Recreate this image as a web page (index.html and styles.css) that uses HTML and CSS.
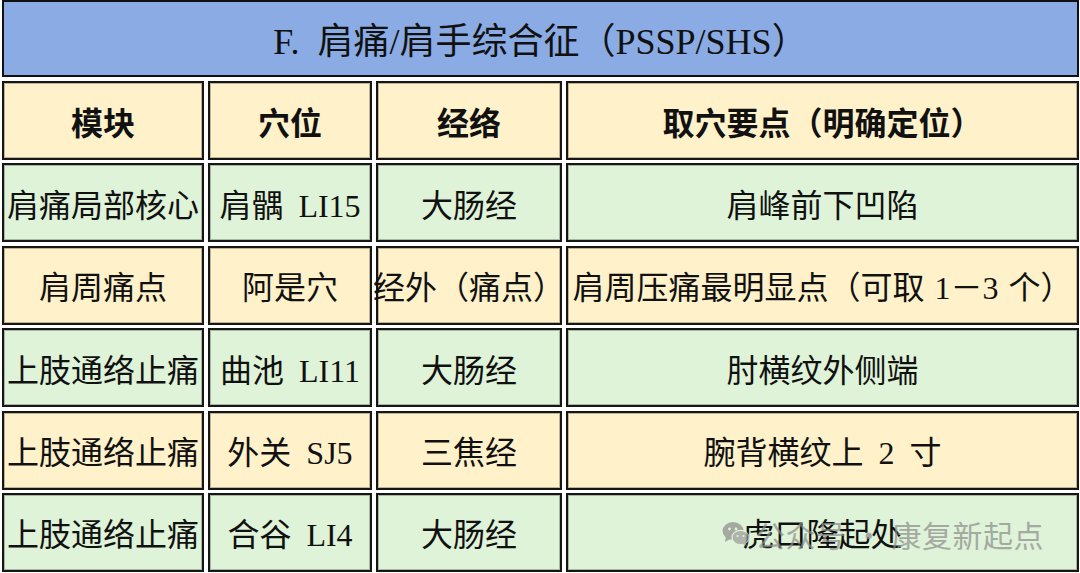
FILE: index.html
```html
<!DOCTYPE html>
<html lang="zh-CN">
<head>
<meta charset="utf-8">
<title>肩痛/肩手综合征</title>
<link rel="stylesheet" href="styles.css">
</head>
<body>
<div class="page">
  <div class="title">F. 肩痛/肩手综合征（PSSP/SHS）</div>
  <div class="grid">
    <div class="cell head">模块</div>
    <div class="cell head">穴位</div>
    <div class="cell head">经络</div>
    <div class="cell head">取穴要点（明确定位）</div>

    <div class="cell green">肩痛局部核心</div>
    <div class="cell green">肩髃 LI15</div>
    <div class="cell green">大肠经</div>
    <div class="cell green">肩峰前下凹陷</div>

    <div class="cell cream">肩周痛点</div>
    <div class="cell cream">阿是穴</div>
    <div class="cell cream">经外（痛点）</div>
    <div class="cell cream tight">肩周压痛最明显点（可取 1－3 个）</div>

    <div class="cell green">上肢通络止痛</div>
    <div class="cell green">曲池 LI11</div>
    <div class="cell green">大肠经</div>
    <div class="cell green">肘横纹外侧端</div>

    <div class="cell cream">上肢通络止痛</div>
    <div class="cell cream">外关 SJ5</div>
    <div class="cell cream">三焦经</div>
    <div class="cell cream">腕背横纹上 2 寸</div>

    <div class="cell green">上肢通络止痛</div>
    <div class="cell green">合谷 LI4</div>
    <div class="cell green">大肠经</div>
    <div class="cell green">虎口隆起处</div>
  </div>
  <div class="watermark">
    <svg class="wx" width="28" height="26" viewBox="0 0 28 26">
      <ellipse cx="11" cy="10" rx="10.5" ry="9" fill="#8a8a8a"/>
      <path d="M4 16 L3 21 L8 18 Z" fill="#8a8a8a"/>
      <ellipse cx="18.5" cy="16.5" rx="8.5" ry="7.2" fill="#9a9a9a" stroke="#dff3d8" stroke-width="1.2"/>
      <path d="M23 21 L25 25 L20 22.5 Z" fill="#9a9a9a"/>
      <circle cx="7.5" cy="8" r="1.4" fill="#dff3d8"/>
      <circle cx="14" cy="8" r="1.4" fill="#dff3d8"/>
      <circle cx="15.5" cy="15" r="1.1" fill="#dff3d8"/>
      <circle cx="21.5" cy="15" r="1.1" fill="#dff3d8"/>
    </svg>
    <span>公众号 · 康复新起点</span>
  </div>
</div>
</body>
</html>
```
FILE: styles.css
```css
html, body {
  margin: 0;
  padding: 0;
  background: #ffffff;
}
.page {
  position: relative;
  width: 1080px;
  height: 573px;
  overflow: hidden;
  font-family: "Liberation Serif", "Noto Sans CJK SC", serif;
  color: #111;
}
.title {
  box-sizing: border-box;
  margin-left: 2px;
  width: 1077px;
  height: 77px;
  background: #8aabe3;
  border: 2px solid #111;
  display: flex;
  align-items: center;
  justify-content: center;
  font-size: 36px;
  word-spacing: 9px;
  padding-bottom: 2px;
}
.grid {
  margin-top: 4px;
  margin-left: 2px;
  display: grid;
  grid-template-columns: 202px 164px 186px 513px;
  grid-auto-rows: 79px;
  column-gap: 4px;
  row-gap: 3.4px;
}
.cell {
  box-sizing: border-box;
  border: 2px solid #161616;
  box-shadow: inset 0 0 0 1px rgba(0, 0, 0, 0.25);
  display: flex;
  align-items: center;
  justify-content: center;
  font-size: 32px;
  word-spacing: 7px;
  white-space: nowrap;
  overflow: visible;
}
.tight {
  word-spacing: 2px;
}
.head {
  background: #fff1c9;
  font-weight: bold;
}
.cream {
  background: #fff1c9;
}
.green {
  background: #dff3d8;
}
.watermark {
  position: absolute;
  left: 722px;
  top: 512px;
  display: flex;
  align-items: center;
  gap: 5px;
  opacity: 0.7;
  pointer-events: none;
}
.watermark span {
  font-family: "Noto Sans CJK SC", sans-serif;
  font-size: 30px;
  color: #8c8c8c;
  letter-spacing: 0.5px;
}
```
